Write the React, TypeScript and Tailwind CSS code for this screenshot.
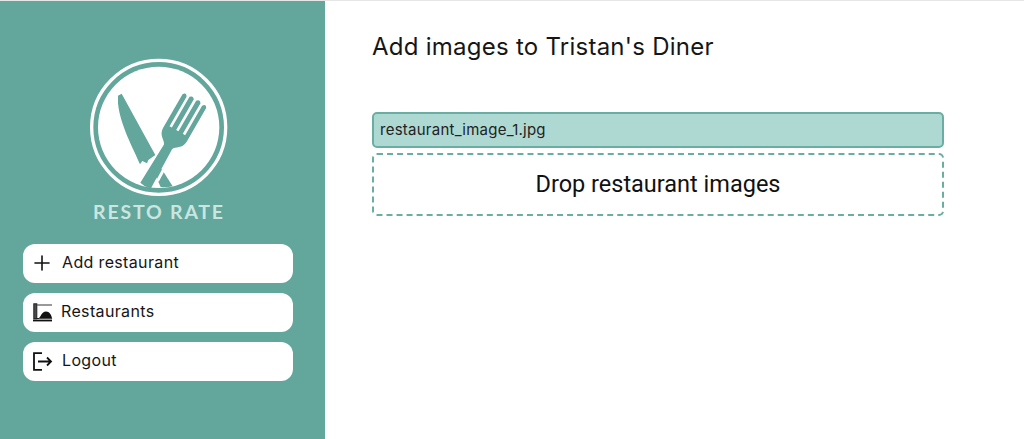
import React from 'react';
import { Plus } from 'lucide-react';

const Logo = () => (
  <svg viewBox="0 0 540 480" className="w-[180px] h-[160px] block">
    <circle cx="266" cy="247" r="201" fill="none" stroke="#fff" strokeWidth="10" />
    <circle cx="266" cy="247" r="182" fill="#fff" />
    {/* knife */}
    <path d="M144 152 L155 146 L256 330 L235 345 L231 355 L217 348 L210 358 C190 310 150 240 144 175 Z" fill="#63a69b" />
    <path d="M252 382 L275 372 L308 424 Q290 428 272 426 Z" fill="#63a69b" />
    {/* fork */}
    <g transform="translate(229 418) rotate(30)">
      <path
        d="M-18 5 L-14 -130 C-18 -142 -41 -146 -41 -172 L-41 -288 Q-34 -300 -27 -288 L-27 -186 L-19 -186 L-19 -292 Q-12 -302 -4 -292 L-4 -186 L4 -186 L4 -292 Q12 -302 19 -292 L19 -186 L27 -186 L27 -288 Q34 -300 41 -288 L41 -172 C41 -146 18 -142 14 -130 L18 5 Q0 10 -18 5 Z"
        fill="#63a69b"
      />
      <path d="M21 -115 L24 -25" stroke="#fff" strokeWidth="9" fill="none" />
    </g>
  </svg>
);

const RestaurantIcon = () => (
  <svg viewBox="0 0 20 20" className="w-[20px] h-[20px] shrink-0" fill="none">
    <rect x="0.8" y="0.8" width="3" height="15" fill="#4a4a4a" stroke="#222" strokeWidth="1" />
    <path d="M4 2 H19" stroke="#555" strokeWidth="1.2" />
    <path d="M5 15.8 C7.5 15 8.5 8.5 13 8.5 C16.5 8.5 18.5 12 19.2 15.8 Z" fill="#111" />
    <path d="M0 17.5 H19" stroke="#111" strokeWidth="1.8" />
    <path d="M1 15.5 H6" stroke="#222" strokeWidth="1" />
  </svg>
);

const LogoutIcon = () => (
  <svg viewBox="0 0 20 20" className="w-[20px] h-[20px] shrink-0" fill="none" stroke="#111" strokeWidth="1.8">
    <path d="M9 1.2 H1 V17.8 H9" />
    <path d="M5 9.5 H18 M14 5.5 L18 9.5 L14 13.5" />
  </svg>
);

const NavButton = ({ icon, label, gap }: { icon: React.ReactNode; label: string; gap: string }) => (
  <button className={`h-[39px] w-full bg-white rounded-xl flex items-center text-[16px] tracking-[0.35px] text-[#161616] pl-[10px] ${gap}`}>
    {icon}
    <span className="relative -top-[2px]">{label}</span>
  </button>
);

export default function App() {
  return (
    <div className="h-[439px] w-[1024px] overflow-hidden bg-white flex flex-col font-['Inter','Liberation_Sans',sans-serif]">
      <div className="h-px bg-[#e6e6e6] shrink-0" />
      <div className="flex flex-1 min-h-0">
        <aside className="w-[325px] bg-[#63a69b] shrink-0 flex flex-col pl-[23px] pr-[32px] pt-[44px]">
          <div className="flex flex-col">
            <div className="ml-[47px]">
              <Logo />
            </div>
            <div className="text-[#c9e6e0] text-center text-[19.5px] leading-[14px] tracking-[1.8px] font-bold font-['Lato',sans-serif] h-[39px] pl-[2px]">RESTO RATE</div>
          </div>
          <nav className="flex flex-col gap-[10px]">
            <NavButton icon={<Plus size={24} strokeWidth={1.6} className="shrink-0 -ml-[3px] -mt-[2px] text-[#111]" />} label="Add restaurant" gap="gap-[8px]" />
            <NavButton icon={<RestaurantIcon />} label="Restaurants" gap="gap-[8px]" />
            <NavButton icon={<LogoutIcon />} label="Logout" gap="gap-[9px]" />
          </nav>
        </aside>
        <main className="flex-1 pl-[47px] pt-[29px]">
          <h1 className="text-[24px] leading-[34px] tracking-[0.25px] text-[#161616] font-normal">Add images to Tristan's Diner</h1>
          <div className="mt-[48px] w-[572px] flex flex-col gap-[5px]">
            <div className="h-[36px] bg-[#aed9d3] border-2 border-[#6aaea3] rounded-[5px] flex items-center px-[6px] text-[15px] tracking-[0.25px] text-[#222]">
              restaurant_image_1.jpg
            </div>
            <div className="h-[63px] border-2 border-dashed border-[#6aaea3] rounded-[5px] flex items-center justify-center text-[23.5px] text-[#111] font-['Roboto',sans-serif]">
              Drop restaurant images
            </div>
          </div>
        </main>
      </div>
    </div>
  );
}
